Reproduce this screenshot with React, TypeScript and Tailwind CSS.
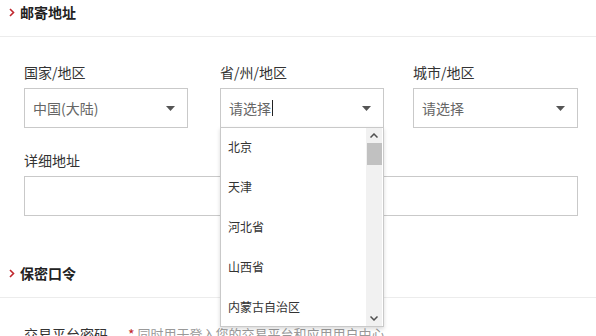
import React from "react";

const font = { fontFamily: '"Microsoft YaHei","Noto Sans CJK SC","Noto Sans",sans-serif' };

function Caret() {
  return (
    <svg width="9" height="5" viewBox="0 0 9 5" className="shrink-0">
      <path d="M0 0 L9 0 L4.5 5 Z" fill="#555" />
    </svg>
  );
}

function Chevron() {
  return (
    <svg width="6" height="9" viewBox="0 0 6 9" className="shrink-0">
      <path d="M1 1 L4.5 4.5 L1 8" fill="none" stroke="#c0272d" strokeWidth="1.6" />
    </svg>
  );
}

function Select({ text, cursor, width }: { text: string; cursor?: boolean; width: string }) {
  return (
    <div className={`h-[40px] border border-[#c9c9c9] bg-white flex items-center justify-between pl-[8px] pr-[12px] ${width}`}>
      <span className="text-[14px] text-[#666] flex items-center">
        {text}
        {cursor && <span className="inline-block w-px h-[16px] bg-[#222] ml-[1px]" />}
      </span>
      <Caret />
    </div>
  );
}

export default function App() {
  const items = ["北京", "天津", "河北省", "山西省", "内蒙古自治区"];
  return (
    <div className="relative w-[596px] h-[336px] overflow-hidden bg-white" style={font}>
      <div className="flex items-start h-[37px] border-b border-[#ececec] pl-[9px] pt-[3px] gap-[5px]">
        <div className="pt-[5px]"><Chevron /></div>
        <span className="text-[14px] font-bold text-[#222] leading-[18px]">邮寄地址</span>
      </div>

      <div className="pl-[24px] pt-[25px]">
        <div className="flex">
          <div className="w-[196px]">
            <div className="text-[14px] text-[#333] leading-[20px]">国家/地区</div>
            <div className="mt-[6px]"><Select text="中国(大陆)" width="w-[164px]" /></div>
          </div>
          <div className="w-[193px]">
            <div className="text-[14px] text-[#333] leading-[20px]">省/州/地区</div>
            <div className="mt-[6px]"><Select text="请选择" cursor width="w-[164px]" /></div>
          </div>
          <div>
            <div className="text-[14px] text-[#333] leading-[20px]">城市/地区</div>
            <div className="mt-[6px]"><Select text="请选择" width="w-[165px]" /></div>
          </div>
        </div>

        <div className="mt-[22px] text-[14px] text-[#333] leading-[20px]">详细地址</div>
        <div className="mt-[6px] w-[554px] h-[40px] border border-[#c9c9c9] bg-white" />
      </div>

      <div className="mt-[45px] flex items-start h-[37px] border-b border-[#ececec] pl-[9px] pt-[3px] gap-[5px]">
        <div className="pt-[5px]"><Chevron /></div>
        <span className="text-[14px] font-bold text-[#222] leading-[18px]">保密口令</span>
      </div>

      <div className="pl-[24px] pt-[26px] flex items-center text-[14px] leading-[20px]">
        <span className="text-[#333] w-[104px]">交易平台密码</span>
        <span className="text-[#c0272d] mr-[3px]">*</span>
        <span className="text-[#999] text-[13px]">同时用于登入您的交易平台和应用用户中心</span>
      </div>

      {/* dropdown */}
      <div className="absolute left-[220px] top-[127px] w-[164px] h-[200px] bg-white border border-[#c9c9c9] shadow-[0_2px_4px_rgba(0,0,0,0.15)] flex">
        <div className="flex-1 flex flex-col -mt-[1px]">
          {items.map((it) => (
            <div key={it} className="h-[40px] shrink-0 flex items-center pl-[7px] text-[12px] text-[#333]">
              {it}
            </div>
          ))}
        </div>
        <div className="w-[16px] bg-[#f1f1f1] flex flex-col items-center mr-[1px]">
          <div className="h-[15px] flex items-center justify-center">
            <svg width="8" height="5" viewBox="0 0 8 5"><path d="M0.5 4.5 L4 1 L7.5 4.5" fill="none" stroke="#505050" strokeWidth="1.5" /></svg>
          </div>
          <div className="w-[15px] h-[22px] bg-[#c1c1c1]" />
          <div className="flex-1" />
          <div className="h-[15px] flex items-center justify-center">
            <svg width="8" height="5" viewBox="0 0 8 5"><path d="M0.5 0.5 L4 4 L7.5 0.5" fill="none" stroke="#505050" strokeWidth="1.5" /></svg>
          </div>
        </div>
      </div>
    </div>
  );
}
